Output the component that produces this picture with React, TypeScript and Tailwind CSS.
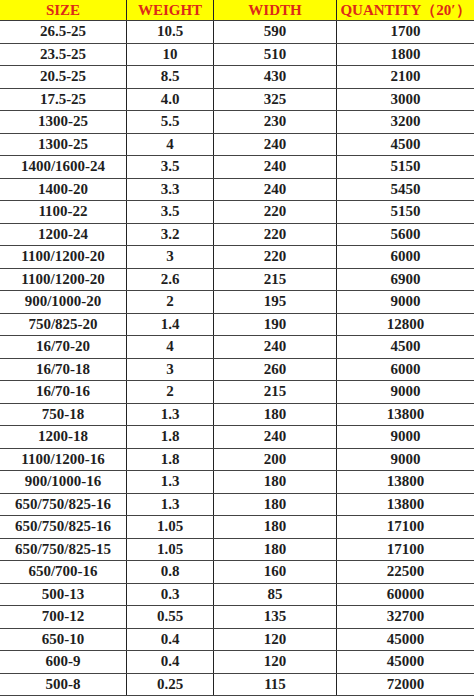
const ROWS: [string, string, string, string][] = [
  ["26.5-25", "10.5", "590", "1700"],
  ["23.5-25", "10", "510", "1800"],
  ["20.5-25", "8.5", "430", "2100"],
  ["17.5-25", "4.0", "325", "3000"],
  ["1300-25", "5.5", "230", "3200"],
  ["1300-25", "4", "240", "4500"],
  ["1400/1600-24", "3.5", "240", "5150"],
  ["1400-20", "3.3", "240", "5450"],
  ["1100-22", "3.5", "220", "5150"],
  ["1200-24", "3.2", "220", "5600"],
  ["1100/1200-20", "3", "220", "6000"],
  ["1100/1200-20", "2.6", "215", "6900"],
  ["900/1000-20", "2", "195", "9000"],
  ["750/825-20", "1.4", "190", "12800"],
  ["16/70-20", "4", "240", "4500"],
  ["16/70-18", "3", "260", "6000"],
  ["16/70-16", "2", "215", "9000"],
  ["750-18", "1.3", "180", "13800"],
  ["1200-18", "1.8", "240", "9000"],
  ["1100/1200-16", "1.8", "200", "9000"],
  ["900/1000-16", "1.3", "180", "13800"],
  ["650/750/825-16", "1.3", "180", "13800"],
  ["650/750/825-16", "1.05", "180", "17100"],
  ["650/750/825-15", "1.05", "180", "17100"],
  ["650/700-16", "0.8", "160", "22500"],
  ["500-13", "0.3", "85", "60000"],
  ["700-12", "0.55", "135", "32700"],
  ["650-10", "0.4", "120", "45000"],
  ["600-9", "0.4", "120", "45000"],
  ["500-8", "0.25", "115", "72000"],
]

const HEADERS = ["SIZE", "WEIGHT", "WIDTH", "QUANTITY（20′）"]

export default function App() {
  return (
    <div className="w-[474px] h-[698px] bg-white font-['Liberation_Serif',serif] font-bold text-[15px] text-[#1e1e1e]">
      {/* Header */}
      <div className="grid grid-cols-[127px_87px_123px_1fr] h-[21px] bg-[#ffff00] border-b border-[#3a3a3a] text-[#dc2a18]">
        {HEADERS.map((h, i) => (
          <div
            key={h}
            className={`flex items-center justify-center leading-none whitespace-nowrap ${
              i < 3 ? "border-r border-[#222]" : ""
            }`}
          >
            {h}
          </div>
        ))}
      </div>

      {/* Rows */}
      {ROWS.map((row, r) => (
        <div
          key={r}
          className="grid grid-cols-[127px_87px_123px_1fr] h-[22.5px] border-b border-[#444]"
        >
          {row.map((cell, i) => (
            <div
              key={i}
              className={`flex items-center justify-center leading-none ${
                i < 3 ? "border-r border-[#222]" : ""
              }`}
            >
              {cell}
            </div>
          ))}
        </div>
      ))}
    </div>
  )
}
